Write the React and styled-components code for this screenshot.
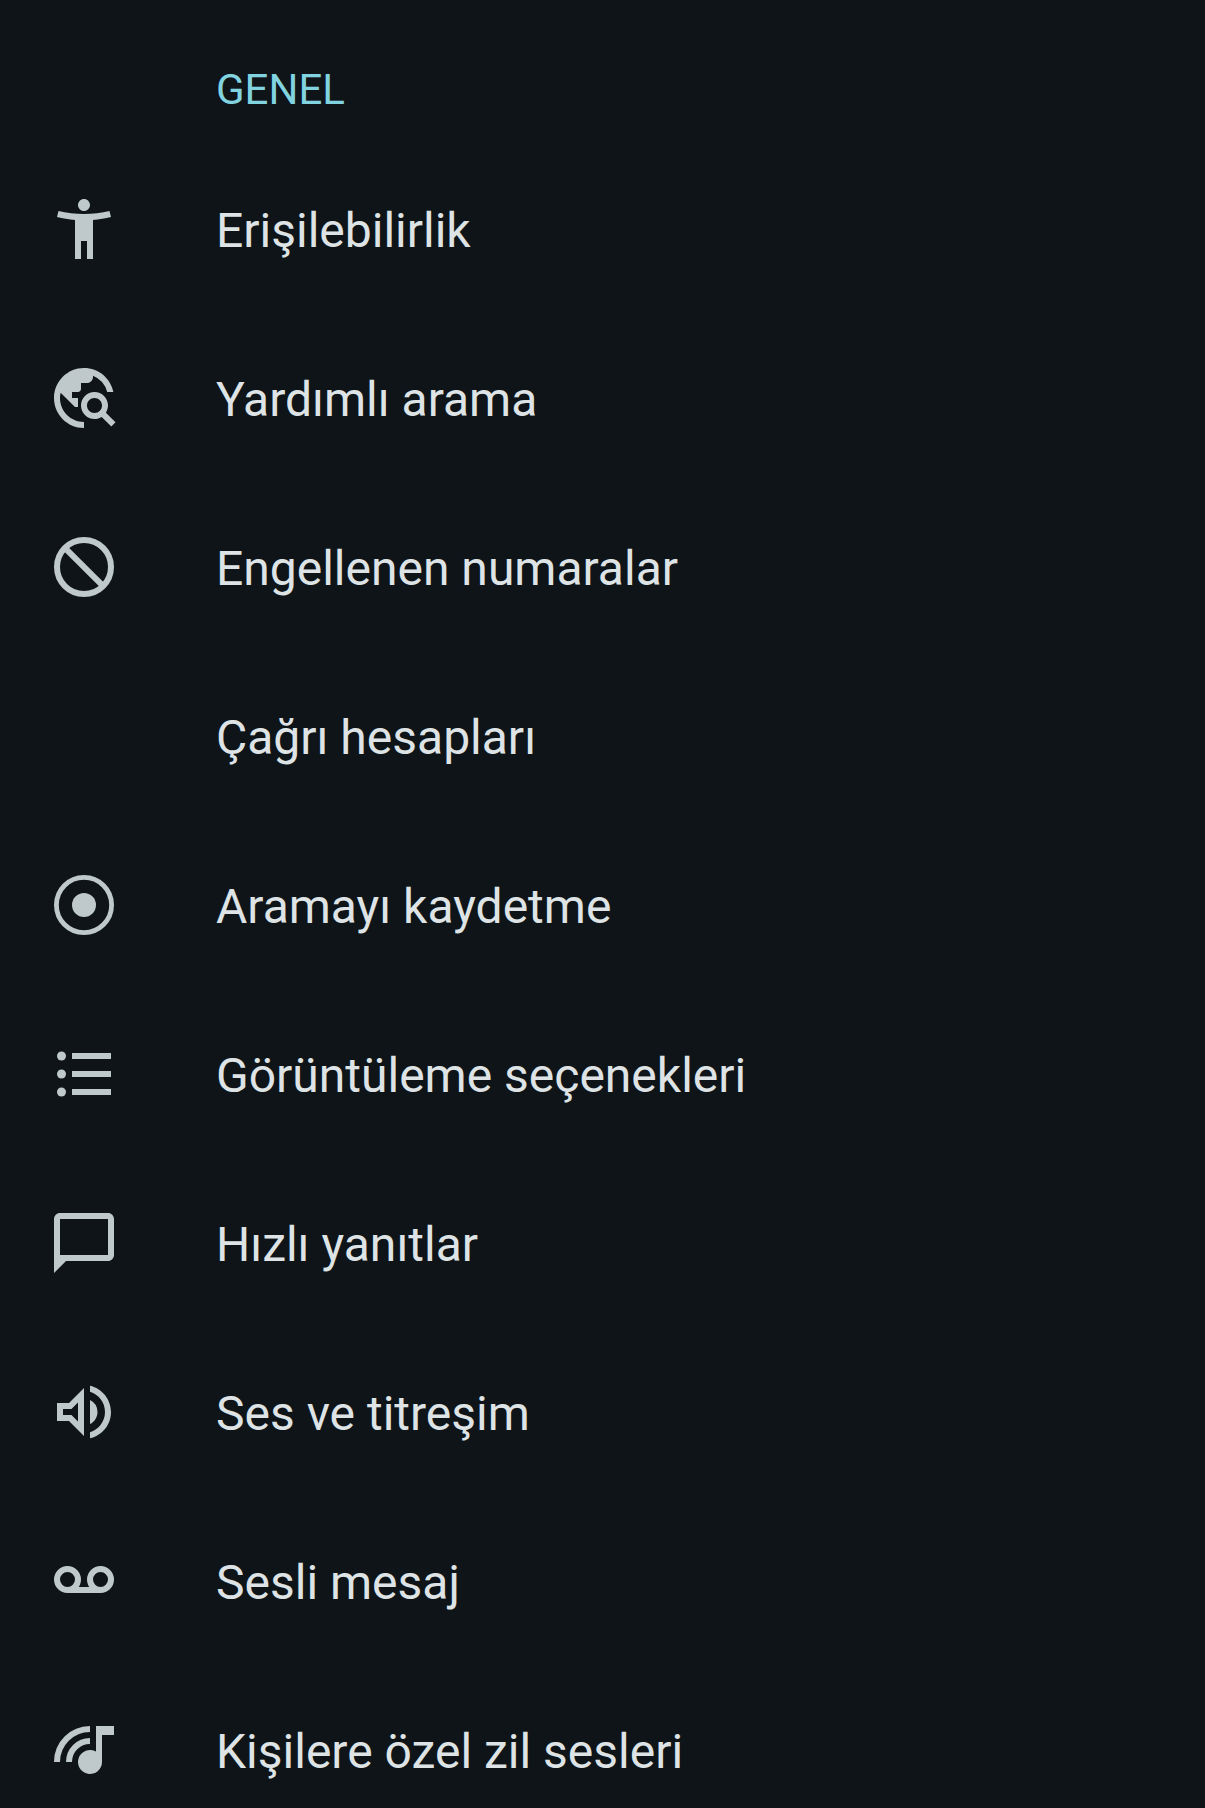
import React from 'react';
import styled, { createGlobalStyle } from 'styled-components';

const GlobalStyle = createGlobalStyle`
  body {
    margin: 0;
    background: #0f1418;
    font-family: Roboto, 'Noto Sans', sans-serif;
  }
`

const Screen = styled.main`
  height: 100vh;
  overflow-y: auto;
  scrollbar-width: none;
  background: #0f1418;
  color: #dee3e5;
`

const SectionTitle = styled.h2`
  display: flex;
  align-items: center;
  box-sizing: border-box;
  height: 144px;
  margin: 0;
  padding: 36px 48px 0 216px;
  color: #82d3e0;
  font-size: 42px;
  font-weight: 400;
  line-height: 48px;
`

const List = styled.ul`
  margin: 0;
  padding: 0;
  list-style: none;
`

const Row = styled.button`
  display: flex;
  align-items: center;
  gap: 96px;
  width: 100%;
  height: 169px;
  padding: 0 48px;
  border: 0;
  background: transparent;
  color: inherit;
  font: inherit;
  font-size: 48px;
  line-height: 60px;
  text-align: left;
  cursor: pointer;
`

const IconSlot = styled.span`
  display: flex;
  flex: none;
  width: 72px;
  height: 72px;
  color: #bfc8ca;
`

const Icon = styled.svg.attrs({ viewBox: '0 0 24 24', 'aria-hidden': true })`
  width: 100%;
  height: 100%;
  fill: currentColor;
`

const Outline = styled.g`
  fill: none;
  stroke: currentColor;
  stroke-width: ${({ $width }) => $width || 2};
`

const Label = styled.span`
  padding-top: 4px;
`

const icons = {
  accessibility: (
    <path d="M20.5 6c-2.61.7-5.67 1-8.5 1s-5.89-.3-8.5-1L3 8c1.86.5 4 .83 6 1v13h2v-6h2v6h2V9c2-.17 4.14-.5 6-1l-.5-2zM12 6c1.1 0 2-.9 2-2s-.9-2-2-2-2 .9-2 2 .9 2 2 2z" />
  ),
  explore: (
    <path d="M19.3 16.9c.4-.7.7-1.5.7-2.4 0-2.5-2-4.5-4.5-4.5S11 12 11 14.5s2 4.5 4.5 4.5c.9 0 1.7-.3 2.4-.7l3.2 3.2 1.4-1.4-3.2-3.2zm-3.8.1c-1.4 0-2.5-1.1-2.5-2.5s1.1-2.5 2.5-2.5 2.5 1.1 2.5 2.5-1.1 2.5-2.5 2.5zM12 20v2C6.48 22 2 17.52 2 12S6.48 2 12 2c4.84 0 8.87 3.44 9.8 8h-2.07A8 8 0 0 0 15 4.59V5c0 1.1-.9 2-2 2h-2v2c0 .55-.45 1-1 1H8v2h2v3H9l-4.79-4.79C4.08 10.79 4 11.38 4 12c0 4.41 3.59 8 8 8z" />
  ),
  block: (
    <Outline>
      <circle cx="12" cy="12" r="9" />
      <path d="M5.6 5.6l12.8 12.8" />
    </Outline>
  ),
  record: (
    <>
      <Outline $width={1.6}>
        <circle cx="12" cy="12" r="9.2" />
      </Outline>
      <circle cx="12" cy="12" r="4" />
    </>
  ),
  list: (
    <>
      <circle cx="4.5" cy="6" r="1.5" />
      <circle cx="4.5" cy="12" r="1.5" />
      <circle cx="4.5" cy="18" r="1.5" />
      <path d="M8 5h13v2H8zM8 11h13v2H8zM8 17h13v2H8z" />
    </>
  ),
  chat: (
    <path d="M20 2H4c-1.1 0-2 .9-2 2v18l4-4h14c1.1 0 2-.9 2-2V4c0-1.1-.9-2-2-2zm0 14H4V4h16v12z" />
  ),
  volume: (
    <path d="M3 9v6h4l5 5V4L7 9H3zm7-.17v6.34L7.83 13H5v-2h2.83L10 8.83zM16.5 12A4.5 4.5 0 0 0 14 7.97v8.05c1.48-.73 2.5-2.25 2.5-4.02zM14 3.23v2.06c2.89.86 5 3.54 5 6.71s-2.11 5.85-5 6.71v2.06c4.01-.91 7-4.49 7-8.77s-2.99-7.86-7-8.77z" />
  ),
  voicemail: (
    <Outline>
      <circle cx="6.5" cy="11.5" r="3.5" />
      <circle cx="17.5" cy="11.5" r="3.5" />
      <path d="M6.5 15h11" />
    </Outline>
  ),
  ringtone: (
    <>
      <Outline>
        <path d="M3 16A11 11 0 0 1 14 5M7 16a7 7 0 0 1 7-7" />
      </Outline>
      <path d="M16 4h6v3h-4v9a4 4 0 1 1-2-3.46z" />
    </>
  ),
}

const items = [
  { label: 'Erişilebilirlik', icon: 'accessibility' },
  { label: 'Yardımlı arama', icon: 'explore' },
  { label: 'Engellenen numaralar', icon: 'block' },
  { label: 'Çağrı hesapları' },
  { label: 'Aramayı kaydetme', icon: 'record' },
  { label: 'Görüntüleme seçenekleri', icon: 'list' },
  { label: 'Hızlı yanıtlar', icon: 'chat' },
  { label: 'Ses ve titreşim', icon: 'volume' },
  { label: 'Sesli mesaj', icon: 'voicemail' },
  { label: 'Kişilere özel zil sesleri', icon: 'ringtone' },
]

const App = () => (
  <>
    <GlobalStyle />
    <Screen lang="tr">
      <SectionTitle>GENEL</SectionTitle>
      <List>
        {items.map(({ label, icon }) => (
          <li key={label}>
            <Row type="button">
              <IconSlot>
                {icon && <Icon>{icons[icon]}</Icon>}
              </IconSlot>
              <Label>{label}</Label>
            </Row>
          </li>
        ))}
      </List>
    </Screen>
  </>
);

export default App
